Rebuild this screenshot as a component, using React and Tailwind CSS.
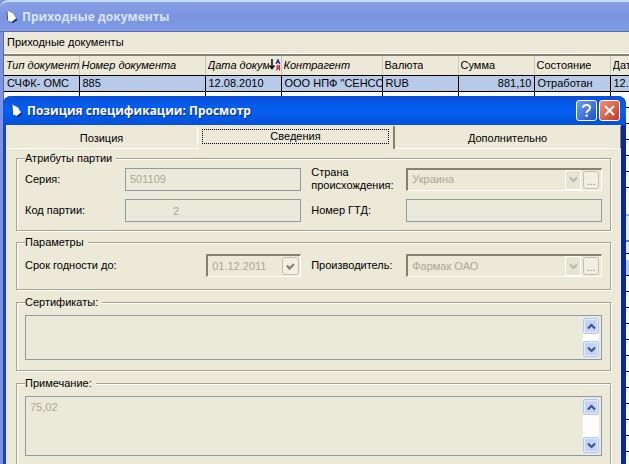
import React, { useState } from 'react';

const COLUMNS = [
  { key: 'type', title: 'Тип документ.', italic: true },
  { key: 'number', title: 'Номер документа', italic: true },
  { key: 'date', title: 'Дата докум', italic: true, sorted: true },
  { key: 'partner', title: 'Контрагент', italic: true },
  { key: 'currency', title: 'Валюта' },
  { key: 'sum', title: 'Сумма', right: true },
  { key: 'state', title: 'Состояние' },
  { key: 'date2', title: 'Дата' }
];

const DOCUMENTS = [
  {
    type: 'СЧФК- ОМС',
    number: '885',
    date: '12.08.2010',
    partner: 'ООО НПФ "СЕНСС',
    currency: 'RUB',
    sum: '881,10',
    state: 'Отработан',
    date2: '12.08.2010'
  },
  {}, {}, {}, {}, {}, {}
];

const TABS = ['Позиция', 'Сведения', 'Дополнительно'];

function AppIcon() {
  return (
    <svg width="12" height="14" viewBox="0 0 12 14" className="shrink-0" aria-hidden="true">
      <path d="M3 11.5 L7 13 L11.5 10 L10 8 Z" fill="#14267c" />
      <path d="M1 0.5 L7 3.5 L10 8.5 L5.5 12 L2 10.5 Z" fill="#fff" />
      <path d="M1 1 L1.6 10" fill="none" stroke="#14267c" strokeWidth="0.7" />
    </svg>
  );
}

function SortIcon() {
  return (
    <svg width="12" height="12" viewBox="0 0 12 12" className="shrink-0" aria-hidden="true">
      <path d="M3 0 V9 M0.5 6.5 L3 9.5 L5.5 6.5" fill="none" stroke="#111" strokeWidth="1.6" />
      <path d="M7 5 L9 0.5 L10.8 5 M7.8 3.5 H10.4" fill="none" stroke="#2a2ab0" strokeWidth="1.2" />
      <path d="M10.5 11.5 V6.8 H8.6 Q7.3 8 8.6 9.2 H10.5 M8.8 9.2 L7.3 11.5" fill="none" stroke="#b8203c" strokeWidth="1.2" />
    </svg>
  );
}

function Chevron({ up, className }) {
  return (
    <svg width="9" height="7" viewBox="0 0 9 7" className={className} aria-hidden="true">
      <path d={up ? 'M1 5.5 L4.5 2 L8 5.5' : 'M1 1.5 L4.5 5 L8 1.5'} fill="none" stroke="currentColor" strokeWidth="2.2" />
    </svg>
  );
}

function Group({ title, className, children }) {
  return (
    <fieldset className={`min-w-0 border border-[#a5a493] px-2 shadow-[1px_1px_0_#fff,inset_1px_1px_0_#fff] ${className}`}>
      <legend className="bg-[#ece9d8] pr-1 leading-3">{title}</legend>
      {children}
    </fieldset>
  );
}

function Field({ id, label, value, className }) {
  return (
    <>
      <label htmlFor={id}>{label}</label>
      <input
        id={id}
        disabled
        defaultValue={value}
        className={`h-[23px] w-full min-w-0 border border-[#8e9ba6] bg-[#e9ead9] px-1 text-[#aaa895] ${className || ''}`}
      />
    </>
  );
}

function Picker({ id, label, value }) {
  return (
    <>
      <label htmlFor={id} className="pl-2.5 leading-[13px]">{label}</label>
      <div className="flex h-[23px] min-w-0 border-t-2 border-r border-b border-l-2 border-t-[#85836f] border-r-white border-b-white border-l-[#85836f]">
        <div className="relative flex min-w-0 flex-1">
          <select id={id} disabled className="w-full appearance-none bg-transparent pl-1 text-[#aaa895] opacity-100">
            <option>{value}</option>
          </select>
          <span className="pointer-events-none absolute inset-y-0 right-0 flex w-4 items-center justify-center border border-white bg-[#e6e4d5]">
            <Chevron className="text-[#b9b7a6]" />
          </span>
        </div>
        <button type="button" disabled aria-label={`${label} (выбор)`} className="mx-0.5 my-px flex w-4 items-end justify-center rounded-[3px] border border-[#c3c0ad] bg-[#f1efe4] pb-px leading-3 text-[#8f8d7b]">
          ...
        </button>
      </div>
    </>
  );
}

function Memo({ label, value, className }) {
  return (
    <div className={`flex border border-[#8e9ba6] bg-[#ebe9d9] p-0.5 ${className}`}>
      <textarea aria-label={label} disabled defaultValue={value} className="min-w-0 flex-1 resize-none overflow-hidden px-0.5 text-[#aaa895]" />
      <div className="flex w-4 flex-col justify-between bg-[#fdfdfb]">
        <button type="button" aria-label="Вверх" className="flex h-4 items-center justify-center rounded-xs border border-[#b3c6f0] bg-[#c3d3f8] text-[#40557f] shadow-[inset_0_0_0_1px_#e4ecff]">
          <Chevron up />
        </button>
        <button type="button" aria-label="Вниз" className="flex h-4 items-center justify-center rounded-xs border border-[#b3c6f0] bg-[#c3d3f8] text-[#40557f] shadow-[inset_0_0_0_1px_#e4ecff]">
          <Chevron />
        </button>
      </div>
    </div>
  );
}

function DocumentsTable() {
  return (
    <table className="w-[686px] shrink-0 table-fixed border-collapse">
      <colgroup>
        <col className="w-[75px]" />
        <col className="w-[126px]" />
        <col className="w-[76px]" />
        <col className="w-[101px]" />
        <col className="w-[76px]" />
        <col className="w-[76px]" />
        <col className="w-[76px]" />
        <col className="w-[80px]" />
      </colgroup>
      <thead>
        <tr className="h-[19px] bg-[#ece9d8]">
          {COLUMNS.map((col) => (
            <th key={col.key} className="border-r border-b border-r-[#c9c6b4] border-b-black p-0 pl-0.5 text-left font-normal">
              <div className={`flex items-center ${col.italic ? 'italic' : ''}`}>
                <span className="min-w-0 overflow-hidden whitespace-nowrap">{col.title}</span>
                {col.sorted && <SortIcon />}
              </div>
            </th>
          ))}
        </tr>
      </thead>
      <tbody>
        {DOCUMENTS.map((doc, i) => (
          <tr key={i} className={`h-4 ${i === 0 ? 'bg-[#b9cae8]' : 'bg-white'}`}>
            {COLUMNS.map((col) => (
              <td key={col.key} className={`overflow-hidden border-r border-b border-black py-0 pr-0.5 pl-[3px] leading-[15px] whitespace-nowrap ${col.right ? 'text-right' : ''}`}>
                {doc[col.key]}
              </td>
            ))}
          </tr>
        ))}
      </tbody>
    </table>
  );
}

function PositionDialog() {
  const [tab, setTab] = useState('Сведения');

  return (
    <section className="absolute inset-x-[3px] top-24 rounded-t-lg border-r-[5px] border-l-[3px] border-r-[#0a2a9c] border-l-[#1846c0] bg-[#ece9d8]">
      <header className="-mr-[5px] -ml-[3px] flex h-[29px] items-center gap-1 rounded-t-lg bg-linear-to-b from-[#0a50d8] via-[#0460f2] to-[#0450d8] pr-1.5 pl-2">
        <AppIcon />
        <h2 className="flex-1 truncate font-['Open_Sans',sans-serif] text-[12px] font-bold text-white [text-shadow:1px_1px_0_#0a2a80]">
          Позиция спецификации: Просмотр
        </h2>
        <div className="flex gap-0.5">
          <button type="button" aria-label="Справка" className="flex size-[21px] items-center justify-center rounded-[3px] border border-white bg-linear-to-br from-[#6f9cf5] to-[#1c50cf] text-white">
            <svg width="13" height="15" viewBox="0 0 13 15" aria-hidden="true">
              <path d="M3 5 Q3 2 6.5 2 Q10 2 10 4.8 Q10 6.4 8 7.6 Q6.5 8.5 6.5 10" fill="none" stroke="currentColor" strokeWidth="2" />
              <rect x="5.5" y="11.5" width="2.2" height="2.2" fill="currentColor" />
            </svg>
          </button>
          <button type="button" aria-label="Закрыть" className="flex size-[21px] items-center justify-center rounded-[3px] border border-white bg-linear-to-br from-[#ee8e74] to-[#c8361a] text-white">
            <svg width="13" height="13" viewBox="0 0 13 13" aria-hidden="true">
              <path d="M2 2 L11 11 M11 2 L2 11" stroke="currentColor" strokeWidth="2" />
            </svg>
          </button>
        </div>
      </header>

      <div role="tablist" className="grid grid-cols-[192fr_197fr_226fr] pt-px">
        {TABS.map((name) => (
          <button
            key={name}
            type="button"
            role="tab"
            aria-selected={tab === name}
            onClick={() => setTab(name)}
            className={tab === name
              ? 'h-[23px] border-r-2 border-r-[#85836f] px-1 pt-0.5 pb-1'
              : 'h-[23px] border-r border-b border-white pt-0.5 last:border-r-[#85836f]'}
          >
            <span className={tab === name ? 'block border border-dotted border-black leading-[13px]' : 'block leading-4'}>{name}</span>
          </button>
        ))}
      </div>

      <div className="flex flex-col px-2.5 pt-[3px]">
        <Group title="Атрибуты партии" className="pb-2">
          <div className="grid grid-cols-[100px_9fr_105px_10fr] items-center gap-y-[7px] pt-0.5">
            <Field id="series" label="Серия:" value="501109" />
            <Picker id="country" label="Страна происхождения:" value="Украина" />
            <Field id="code" label="Код партии:" value="2" className="pl-[47px]" />
            <label htmlFor="gtd" className="pl-2.5">Номер ГТД:</label>
            <input id="gtd" disabled className="h-[23px] w-full min-w-0 border border-[#8e9ba6] bg-[#e9ead9] px-1" />
          </div>
        </Group>

        <Group title="Параметры" className="mt-[5px] pb-3">
          <div className="grid grid-cols-[100px_9fr_105px_10fr] items-center pt-1.5">
            <div className="col-span-2 flex items-center justify-between">
              <label htmlFor="expires">Срок годности до:</label>
              <div className="flex h-[23px] w-[95px] border-t-2 border-r border-b border-l-2 border-t-[#85836f] border-r-white border-b-white border-l-[#85836f]">
                <input id="expires" disabled defaultValue="01.12.2011" className="min-w-0 flex-1 pl-1 text-[#aaa895]" />
                <button type="button" disabled aria-label="Календарь" className="m-px flex w-[17px] items-center justify-center rounded-[3px] border border-[#c3c0ad] bg-[#f1efe4]">
                  <svg width="9" height="9" viewBox="0 0 9 9" aria-hidden="true">
                    <path d="M1 3.5 L3.5 6.5 L8 2" fill="none" stroke="#85836f" strokeWidth="2.2" />
                  </svg>
                </button>
              </div>
            </div>
            <Picker id="maker" label="Производитель:" value="Фармак ОАО" />
          </div>
        </Group>

        <Group title="Сертификаты:" className="mt-1.5 pb-2.5">
          <Memo label="Сертификаты" className="mt-[7px] h-[45px]" />
        </Group>

        <Group title="Примечание:" className="mt-1.5 pb-3">
          <Memo label="Примечание" value="75,02" className="mt-[7px] h-[60px]" />
        </Group>
      </div>
    </section>
  );
}

export default function App() {
  return (
    <main className="relative h-screen overflow-hidden bg-[#7b93e0] font-['Liberation_Sans',Arial,sans-serif] text-[11px] text-black">
      <header className="flex h-8 items-center gap-1 rounded-tl-lg border-t-2 border-b border-t-[#c4dcf4] border-b-[#5d6c9c] bg-linear-to-b from-[#8aa0e6] via-[#7a94e0] to-[#7f9ae6] pl-1.5">
        <AppIcon />
        <h1 className="font-['Open_Sans',sans-serif] text-[12px] font-bold text-[#d8e4f8]">Приходные документы</h1>
      </header>
      <div className="ml-[3px] flex h-full flex-col border-l border-[#5d6c9c] bg-white">
        <div className="h-[22px] shrink-0 border-b border-white bg-[#ece9d8] pl-[3px] leading-5">Приходные документы</div>
        <div className="h-0.5 shrink-0 bg-[#85836f]" />
        <DocumentsTable />
        <div className="mt-[26px] h-7 shrink-0 border-y-2 border-t-[#9bb3c8] border-b-[#6f7a88] bg-[#e4ebe8]" />
        <div className="h-3 shrink-0 border-b border-black bg-[#ece9d8]" />
        <div className="mt-1.5 h-4 shrink-0 border-b border-black bg-[#b9cae8]" />
        {Array.from({ length: 14 }, (_, i) => (
          <div key={i} className="h-4 shrink-0 border-b border-black" />
        ))}
      </div>
      <PositionDialog />
    </main>
  );
}
